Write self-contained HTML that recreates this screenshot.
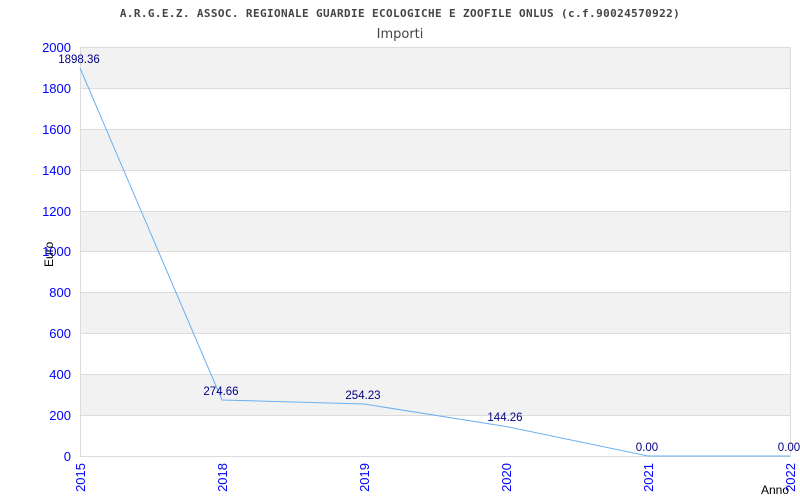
<!DOCTYPE html>
<html><head><style>body{margin:0;background:#fff}svg{display:block}</style></head><body>
<svg width="800" height="500" xmlns="http://www.w3.org/2000/svg" font-family="Liberation Sans, sans-serif">
<text x="400" y="17" text-anchor="middle" font-family="DejaVu Sans Mono, monospace" font-size="11" font-weight="bold" letter-spacing="0.38" fill="#444">A.R.G.E.Z. ASSOC. REGIONALE GUARDIE ECOLOGICHE E ZOOFILE ONLUS (c.f.90024570922)</text>
<text x="400" y="38" text-anchor="middle" font-family="DejaVu Sans, sans-serif" font-size="13" fill="#444">Importi</text>
<g fill="#f2f2f2">
<rect x="80" y="47" width="710" height="41"/><rect x="80" y="129" width="710" height="41"/><rect x="80" y="211" width="710" height="40"/><rect x="80" y="292" width="710" height="41"/><rect x="80" y="374" width="710" height="41"/>
</g>
<g stroke="#dcdcdc" stroke-width="1">
<line x1="80" y1="47.5" x2="790" y2="47.5"/><line x1="80" y1="88.5" x2="790" y2="88.5"/><line x1="80" y1="129.5" x2="790" y2="129.5"/><line x1="80" y1="170.5" x2="790" y2="170.5"/><line x1="80" y1="211.5" x2="790" y2="211.5"/><line x1="80" y1="251.5" x2="790" y2="251.5"/><line x1="80" y1="292.5" x2="790" y2="292.5"/><line x1="80" y1="333.5" x2="790" y2="333.5"/><line x1="80" y1="374.5" x2="790" y2="374.5"/><line x1="80" y1="415.5" x2="790" y2="415.5"/><line x1="80" y1="456.5" x2="790" y2="456.5"/>
<line x1="80.5" y1="47" x2="80.5" y2="457"/><line x1="790.5" y1="47" x2="790.5" y2="457"/>
</g>
<g fill="#00f" font-size="13" text-anchor="end">
<text x="71" y="52">2000</text><text x="71" y="93">1800</text><text x="71" y="134">1600</text><text x="71" y="175">1400</text><text x="71" y="216">1200</text><text x="71" y="256">1000</text><text x="71" y="297">800</text><text x="71" y="338">600</text><text x="71" y="379">400</text><text x="71" y="420">200</text><text x="71" y="461">0</text>
</g>
<g fill="#00f" font-size="13" text-anchor="end">
<text transform="translate(85,463) rotate(-90)">2015</text>
<text transform="translate(227,463) rotate(-90)">2018</text>
<text transform="translate(369,463) rotate(-90)">2019</text>
<text transform="translate(511,463) rotate(-90)">2020</text>
<text transform="translate(653,463) rotate(-90)">2021</text>
<text transform="translate(795,463) rotate(-90)">2022</text>
</g>
<text transform="translate(53,267) rotate(-90)" font-size="12" fill="#000">Euro</text>
<text x="761" y="494" font-size="12" fill="#000">Anno</text>
<polyline fill="none" stroke="#6ab0f0" stroke-width="1" points="80,68 222,400 364,404 506,426.5 648,456 790,456"/>
<g fill="#000080" font-size="11.5" text-anchor="middle">
<text x="79" y="63">1898.36</text><text x="221" y="395">274.66</text><text x="363" y="399">254.23</text><text x="505" y="421">144.26</text><text x="647" y="451">0.00</text><text x="789" y="451">0.00</text>
</g>
</svg>
</body></html>
